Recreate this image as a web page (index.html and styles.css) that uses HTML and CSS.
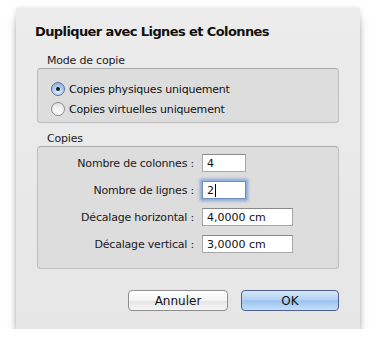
FILE: index.html
```html
<!DOCTYPE html>
<html lang="fr">
<head>
    <meta charset="UTF-8">
    <title>Dupliquer avec Lignes et Colonnes</title>
    <link rel="stylesheet" href="styles.css">
</head>
<body>
    <div class="dialog">
        <h1 class="dialog-title">Dupliquer avec Lignes et Colonnes</h1>

        <div class="group">
            <div class="group-label">Mode de copie</div>
            <div class="group-box radios">
                <label class="radio-row"><span class="radio checked"></span>Copies physiques uniquement</label>
                <label class="radio-row"><span class="radio"></span>Copies virtuelles uniquement</label>
            </div>
        </div>

        <div class="group">
            <div class="group-label">Copies</div>
            <div class="group-box fields">
                <div class="field-row">
                    <span class="field-label">Nombre de colonnes :</span>
                    <span class="field short">4</span>
                </div>
                <div class="field-row">
                    <span class="field-label">Nombre de lignes :</span>
                    <span class="field short focused">2<span class="caret"></span></span>
                </div>
                <div class="field-row">
                    <span class="field-label">Décalage horizontal :</span>
                    <span class="field long">4,0000 cm</span>
                </div>
                <div class="field-row">
                    <span class="field-label">Décalage vertical :</span>
                    <span class="field long">3,0000 cm</span>
                </div>
            </div>
        </div>

        <div class="buttons">
            <button class="btn">Annuler</button>
            <button class="btn btn-default">OK</button>
        </div>
    </div>
</body>
</html>
```

FILE: styles.css
```css
body {
    margin: 0;
    background-color: #fff;
    font-family: "DejaVu Sans", "Open Sans", sans-serif;
    color: #111;
}
.dialog {
    margin: 8px 0 0 16px;
    width: 344px;
    height: 321px;
    box-sizing: border-box;
    padding: 16px 21px 0;
    background: linear-gradient(#ececec, #e6e6e6);
    box-shadow: 0 8px 10px -3px rgba(0, 0, 0, 0.5), 0 0 4px rgba(0, 0, 0, 0.12);
}
.dialog-title {
    margin: 0 0 0 -2px;
    font-size: 13px;
    line-height: 16px;
    font-weight: bold;
    letter-spacing: -0.6px;
}
.group-label {
    margin: 14px 0 1px 10px;
    font-size: 11px;
    line-height: 13px;
    letter-spacing: -0.2px;
    color: #222;
}
.group-box {
    border: 1px solid #bdbdbd;
    border-top-color: #aaa;
    border-radius: 4px;
    background-color: #dddddd;
}
.radios {
    height: 55px;
    padding: 10px 0 0 13px;
    box-sizing: border-box;
}
.radio-row {
    display: flex;
    align-items: center;
    gap: 4px;
    height: 20px;
    font-size: 11px;
    letter-spacing: -0.2px;
}
.radio {
    width: 14px;
    height: 14px;
    box-sizing: border-box;
    border-radius: 50%;
    border: 1px solid #8c8c8c;
    background: radial-gradient(circle at 50% 80%, #ffffff, #f0f0f0 50%, #d8d8d8);
    display: flex;
    align-items: center;
    justify-content: center;
}
.radio.checked {
    border-color: #5e6e94;
    background: radial-gradient(circle at 50% 75%, #d9ecfd, #a9c9ee 55%, #7ea5d8);
}
.radio.checked::after {
    content: "";
    width: 4px;
    height: 4px;
    border-radius: 50%;
    background-color: #1a1a1a;
}
.group + .group .group-label {
    margin-top: 9px;
}
.fields {
    height: 123px;
    box-sizing: border-box;
    padding-top: 7px;
}
.field-row {
    display: flex;
    align-items: center;
    height: 18px;
    margin-bottom: 9px;
    font-size: 11px;
}
.field-label {
    width: 156px;
    text-align: right;
    letter-spacing: -0.2px;
    color: #1a1a1a;
}
.field {
    margin-left: 8px;
    height: 18px;
    box-sizing: border-box;
    padding: 1px 0 0 4px;
    line-height: 15px;
    background-color: #fff;
    border: 1px solid #a6a6a6;
    border-top-color: #8a8a8a;
    display: flex;
    align-items: center;
}
.short {
    width: 44px;
}
.long {
    width: 91px;
}
.focused {
    border-color: #6f8fbf;
    box-shadow: 0 0 0 1px #8fb1e0, 0 0 3px 2px rgba(95, 140, 210, 0.7);
}
.caret {
    display: inline-block;
    width: 1px;
    height: 13px;
    margin-left: 1px;
    background-color: #000;
}
.buttons {
    display: flex;
    justify-content: flex-end;
    gap: 13px;
    margin-top: 21px;
}
.btn {
    width: 100px;
    height: 21px;
    padding: 0;
    border: 1px solid #8e8e8e;
    border-radius: 4px;
    background: linear-gradient(#ffffff, #f4f4f4 50%, #e6e6e6 52%, #f6f6f6);
    font-family: "DejaVu Sans", sans-serif;
    font-size: 12px;
    color: #111;
}
.btn-default {
    width: 98px;
    border-color: #4f5f8e;
    background: linear-gradient(#d6e8fb, #b4d2f4 45%, #9cc3ef 52%, #c2e0fb);
}
```
